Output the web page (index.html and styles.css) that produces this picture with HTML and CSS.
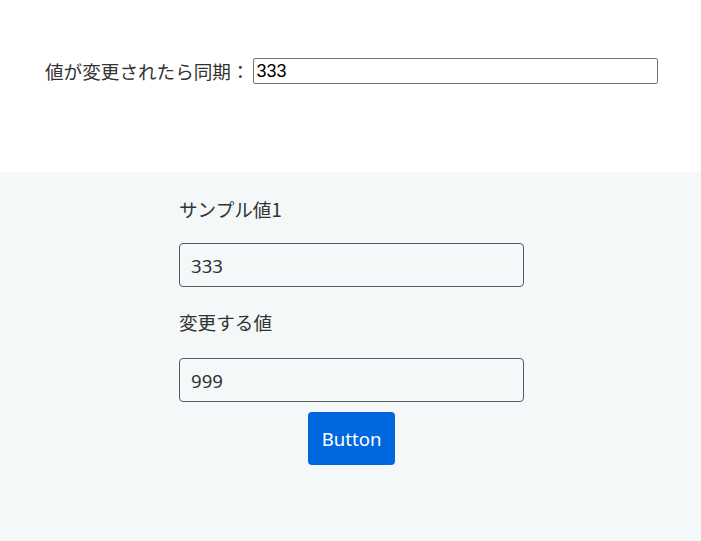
FILE: index.html
```html
<!DOCTYPE html>
<html lang="ja">
<head>
<meta charset="utf-8">
<link rel="stylesheet" href="styles.css">
</head>
<body>
<section class="top">
  <label class="sync-label">値が変更されたら同期：</label><input class="sync-input" type="text" value="333">
</section>
<section class="panel">
  <div class="form">
    <label class="field-label">サンプル値1</label>
    <input class="field-input" type="text" value="333">
    <label class="field-label second">変更する値</label>
    <input class="field-input" type="text" value="999">
    <div class="actions"><button class="btn">Button</button></div>
  </div>
</section>
</body>
</html>
```
FILE: styles.css
```css
html, body {
  margin: 0;
  padding: 0;
  background: #ffffff;
}
body {
  font-family: "Noto Sans", "Noto Sans CJK JP", sans-serif;
  color: #333333;
}
.top {
  height: 172px;
  box-sizing: border-box;
  padding: 58px 0 0 45px;
  display: flex;
  align-items: flex-start;
}
.sync-label {
  font-size: 18.6px;
  line-height: 26px;
  color: #333;
  font-family: "Noto Sans CJK JP", sans-serif;
}
.sync-input {
  margin-left: 3px;
  width: 405px;
  height: 26px;
  box-sizing: border-box;
  border: 1px solid #767676;
  border-radius: 2px;
  padding: 0 3px;
  font-family: "Liberation Sans", Arial, sans-serif;
  font-size: 18px;
  color: #000;
  background: #fff;
}
.panel {
  background: #f4f8f9;
  height: 369px;
  display: flex;
  justify-content: center;
}
.form {
  width: 345px;
  margin-left: 2px;
  display: flex;
  flex-direction: column;
  padding-top: 23px;
}
.field-label {
  font-size: 18.6px;
  line-height: 27px;
  color: #333;
  font-family: "Noto Sans CJK JP", sans-serif;
  margin-bottom: 21px;
}
.field-label.second {
  margin-top: 21px;
  margin-bottom: 23px;
}
.field-input {
  height: 44px;
  box-sizing: border-box;
  border: 1px solid #555b61;
  border-radius: 4px;
  padding: 0 11px;
  font-family: "Noto Sans", sans-serif;
  font-size: 18.6px;
  color: #333;
  background: #f4f8f9;
}
.actions {
  display: flex;
  justify-content: center;
  margin-top: 10px;
}
.btn {
  width: 87px;
  height: 53px;
  border: none;
  border-radius: 4px;
  background: #0067de;
  color: #ffffff;
  font-family: "Noto Sans", sans-serif;
  font-size: 18.6px;
  padding: 0;
}
```
